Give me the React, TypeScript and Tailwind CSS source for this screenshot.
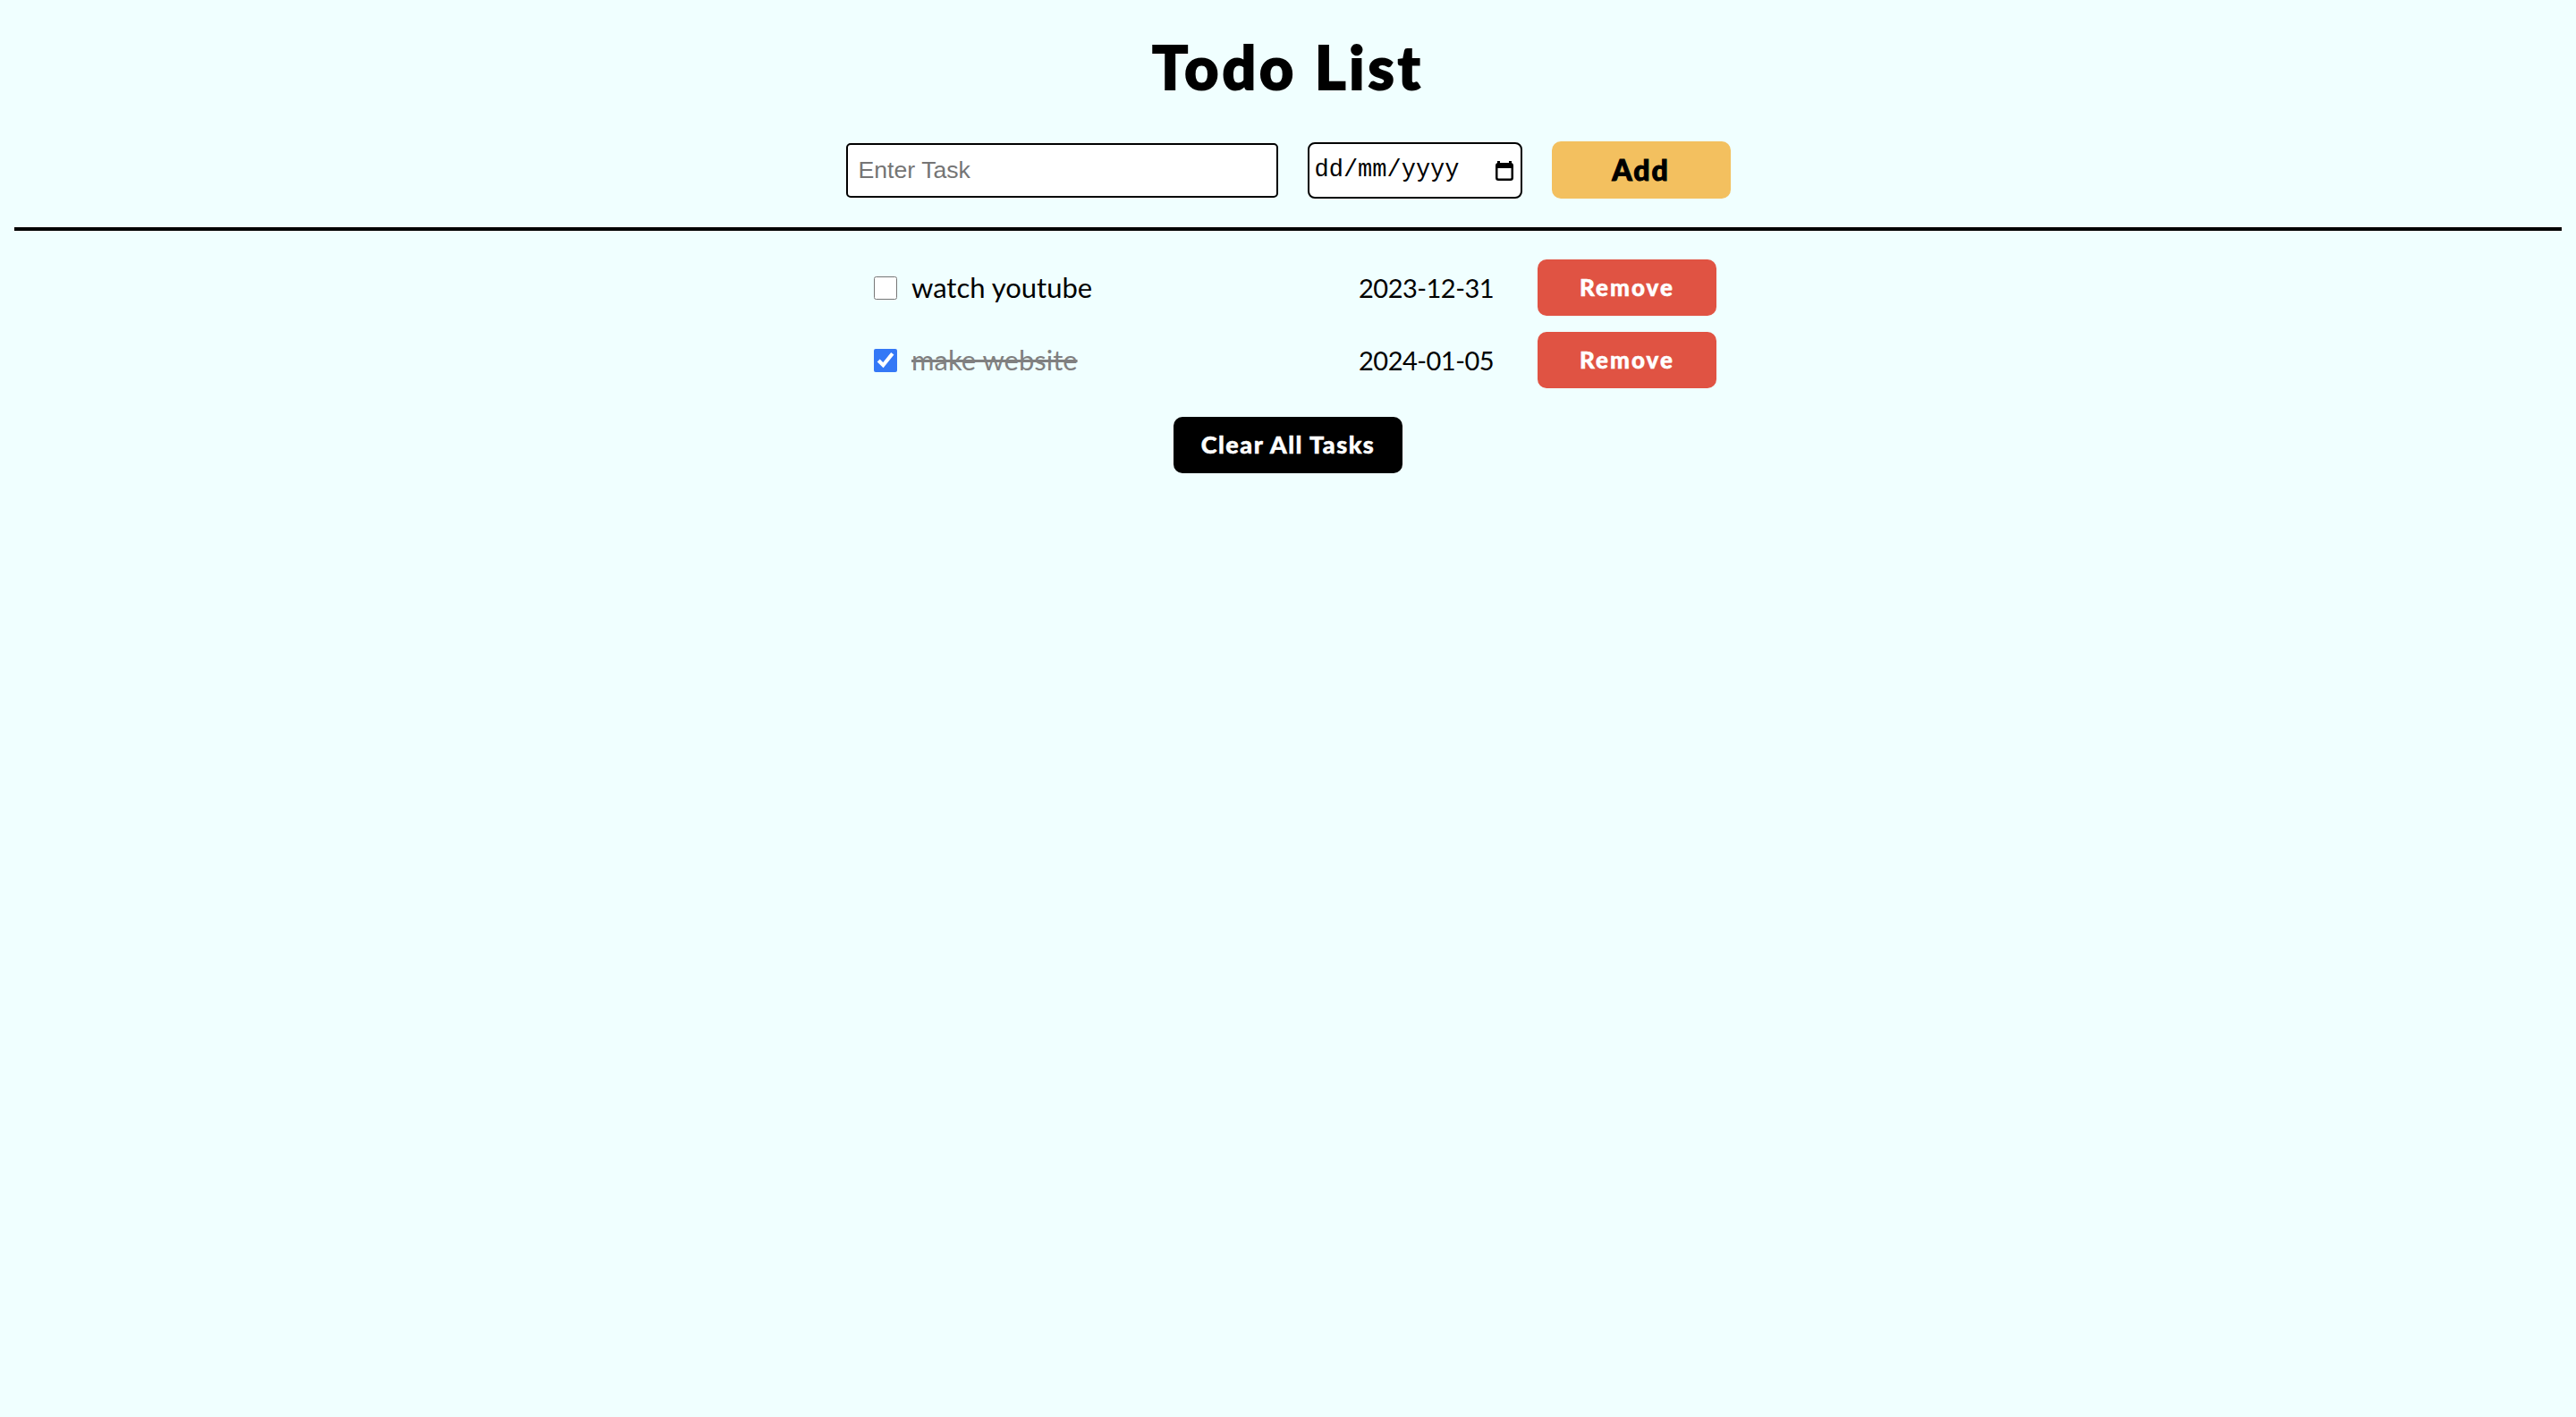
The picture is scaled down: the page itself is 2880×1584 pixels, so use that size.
import React, { useState } from 'react';

type Task = {
  id: number;
  text: string;
  date: string;
  done: boolean;
};

const initialTasks: Task[] = [
  { id: 1, text: 'watch youtube', date: '2023-12-31', done: false },
  { id: 2, text: 'make website', date: '2024-01-05', done: true },
];

const CalendarIcon: React.FC = () => (
  <svg width="20" height="23" viewBox="0 0 20 23" fill="none">
    <rect x="2" y="1" width="3" height="4" fill="#000" />
    <rect x="15" y="1" width="3" height="4" fill="#000" />
    <rect x="1.25" y="4.25" width="17.5" height="17.5" rx="2" stroke="#000" strokeWidth="2.5" />
    <rect x="1" y="4" width="18" height="5" fill="#000" />
  </svg>
);

const App: React.FC = () => {
  const [tasks, setTasks] = useState<Task[]>(initialTasks);
  const [text, setText] = useState('');

  const addTask = (e: React.FormEvent) => {
    e.preventDefault();
    if (!text.trim()) return;
    setTasks([...tasks, { id: Date.now(), text, date: '', done: false }]);
    setText('');
  };

  const toggle = (id: number) =>
    setTasks(tasks.map(t => (t.id === id ? { ...t, done: !t.done } : t)));

  const remove = (id: number) => setTasks(tasks.filter(t => t.id !== id));

  return (
    <div className="min-h-screen bg-[#f0ffff] pt-[42px] text-black font-['Lato','Open_Sans',sans-serif]">
      <h1 className="text-center text-[66px] leading-[66px] font-black tracking-[4px] [-webkit-text-stroke:2px_#000]">
        Todo List
      </h1>

      {/* Add form */}
      <form onSubmit={addTask} className="flex justify-center items-center gap-[33px] mt-[50px]">
        <input
          type="text"
          value={text}
          onChange={e => setText(e.target.value)}
          placeholder="Enter Task"
          className="w-[483px] h-[61px] px-[12px] bg-white border-2 border-black rounded-[5px] text-[26.67px] font-['Liberation_Sans',Arial,sans-serif] placeholder:text-[#757575] outline-none"
        />
        <div className="w-[240px] h-[63px] pl-[6px] pr-[8px] bg-white border-2 border-black rounded-[8px] flex items-center justify-between">
          <span className="text-[27px] font-['Liberation_Mono','DejaVu_Sans_Mono',monospace]">dd/mm/yyyy</span>
          <CalendarIcon />
        </div>
        <button
          type="submit"
          className="w-[200px] h-[64px] bg-[#f3c05f] rounded-[10px] text-[32px] font-black tracking-[2px] [-webkit-text-stroke:1px_#000]"
        >
          Add
        </button>
      </form>

      <div className="mx-[16px] mt-[32px] h-[4px] bg-black" />

      {/* Task list */}
      <div className="flex flex-col items-center gap-[18px] mt-[32px] pl-[16px]">
        {tasks.map(task => (
          <div key={task.id} className="w-[942px] h-[63px] flex items-center">
            <input
              type="checkbox"
              checked={task.done}
              onChange={() => toggle(task.id)}
              className="w-[26px] h-[26px] m-0 accent-[#3478f6]"
            />
            <span
              className={
                task.done
                  ? 'flex-1 ml-[16px] text-[31px] text-[#808080] line-through whitespace-nowrap'
                  : 'flex-1 ml-[16px] text-[31px] whitespace-nowrap'
              }
            >
              {task.text}
            </span>
            <span className="w-[149px] mr-[51px] text-[29px] tracking-[-0.5px] whitespace-nowrap">{task.date}</span>
            <button
              onClick={() => remove(task.id)}
              className="w-[200px] h-[63px] bg-[#e05343] rounded-[10px] text-white text-[26px] font-black tracking-[2px] [-webkit-text-stroke:0.5px_#fff]"
            >
              Remove
            </button>
          </div>
        ))}
      </div>

      <div className="flex justify-center mt-[32px]">
        <button
          onClick={() => setTasks([])}
          className="w-[256px] h-[63px] bg-black rounded-[10px] text-white text-[27px] font-black tracking-[1.5px] [-webkit-text-stroke:0.5px_#fff]"
        >
          Clear All Tasks
        </button>
      </div>
    </div>
  );
};

export default App;
